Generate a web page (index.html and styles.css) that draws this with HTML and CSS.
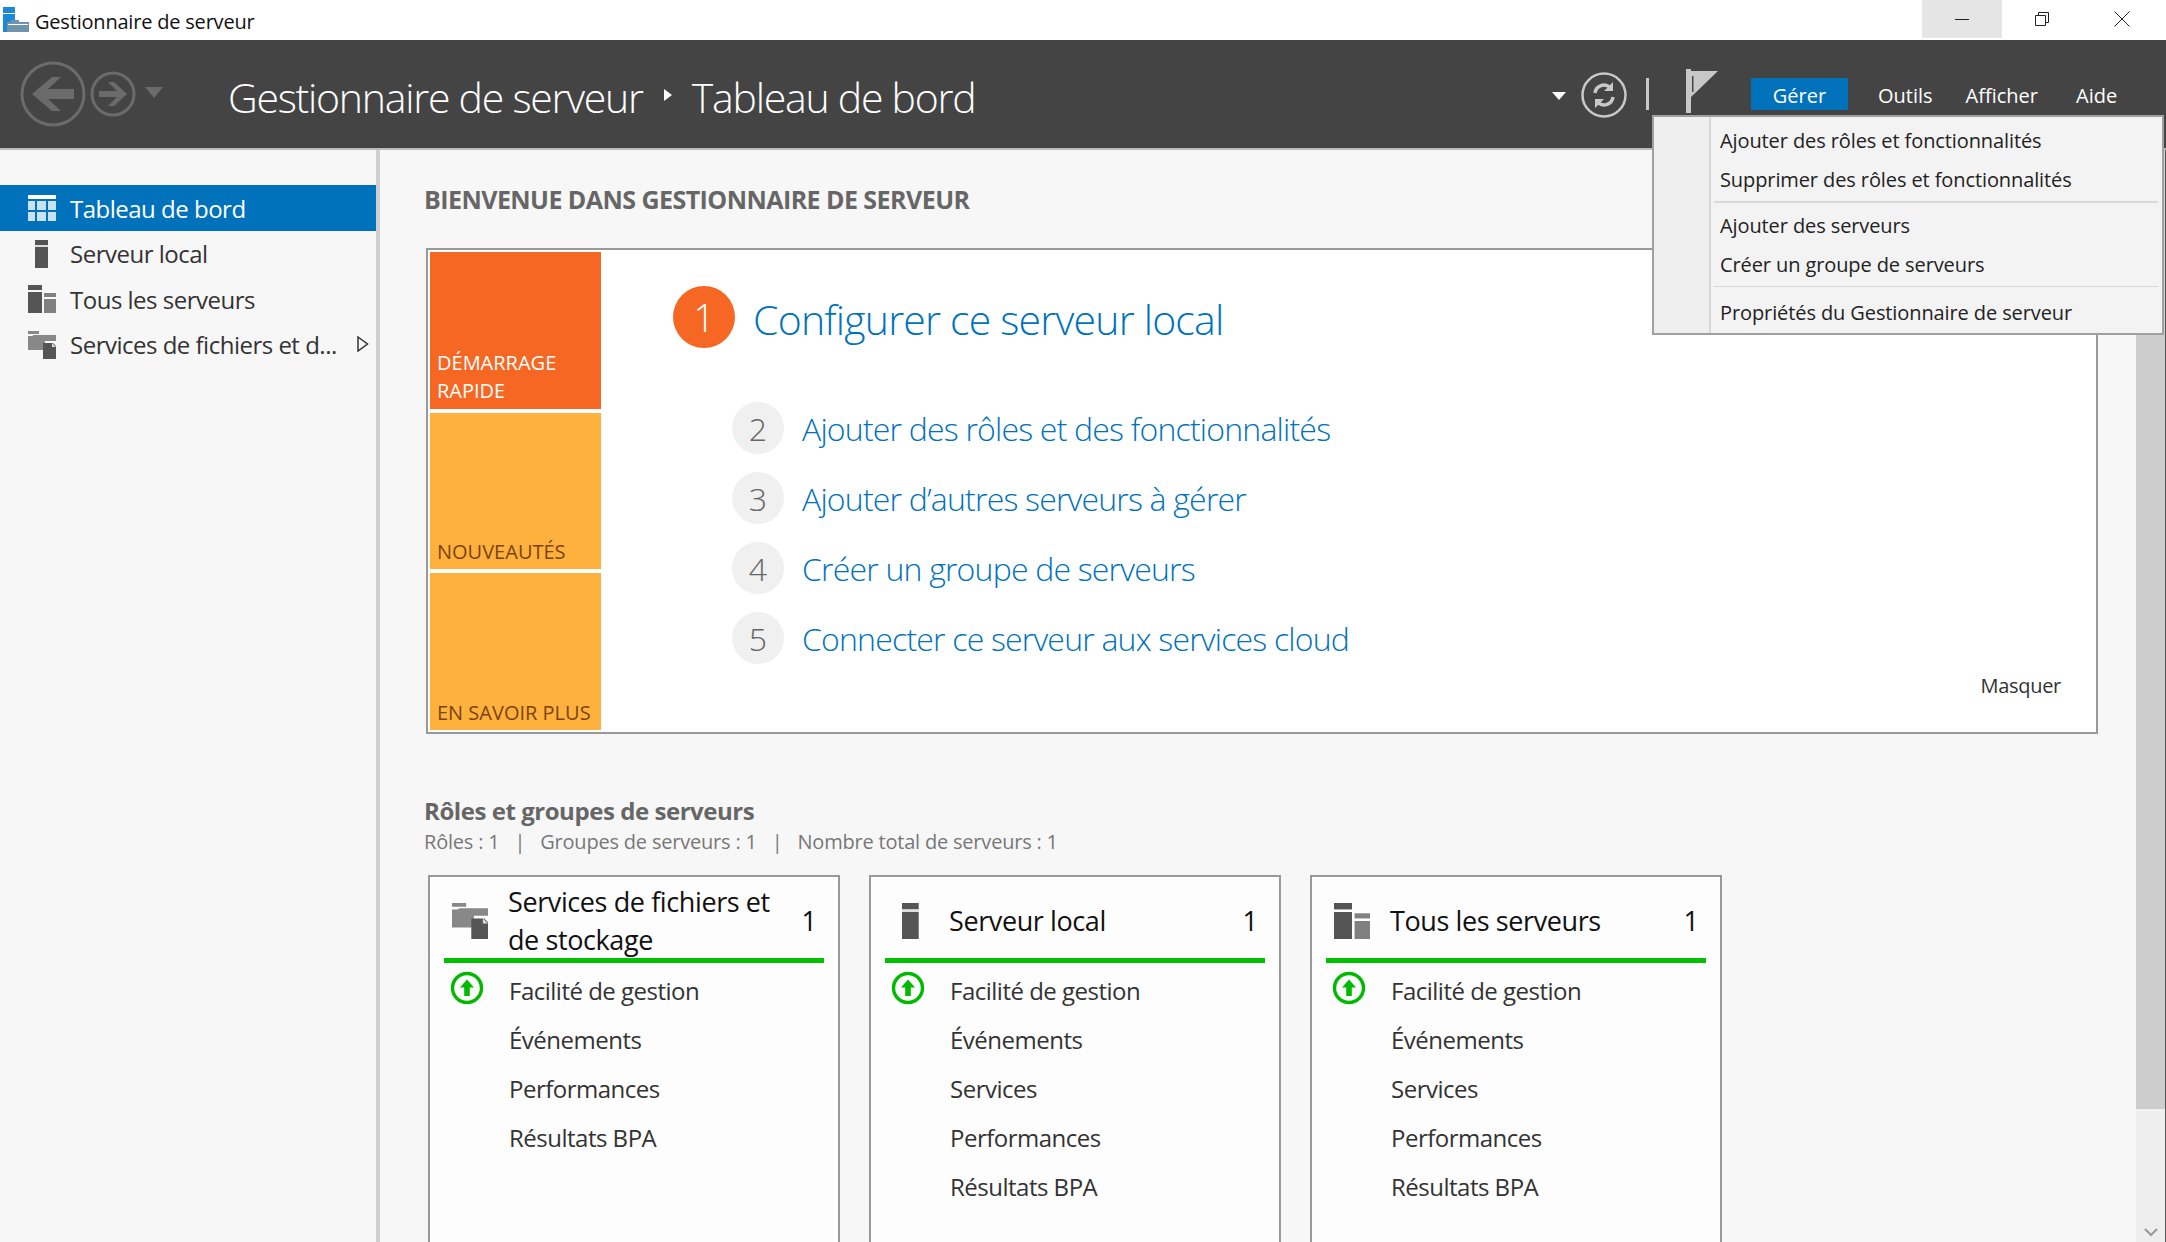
FILE: index.html
```html
<!DOCTYPE html>
<html lang="fr">
<head>
    <meta charset="UTF-8">
    <title>Gestionnaire de serveur</title>
    <link rel="stylesheet" href="styles.css">
</head>
<body>
    <svg class="defs" width="0" height="0">
        <symbol id="ico-local" viewBox="0 0 28 28">
            <rect x="7" y="0" width="13" height="5" fill="#555"/>
            <rect x="7" y="5" width="13" height="2" fill="#ddd"/>
            <rect x="7" y="7" width="13" height="21" fill="#555"/>
        </symbol>
        <symbol id="ico-all" viewBox="0 0 28 28">
            <rect x="0" y="0" width="14" height="5" fill="#555"/>
            <rect x="0" y="7" width="14" height="21" fill="#555"/>
            <rect x="16" y="8" width="12" height="4" fill="#808080"/>
            <rect x="16" y="14" width="12" height="14" fill="#808080"/>
        </symbol>
        <symbol id="ico-files" viewBox="0 0 28 28">
            <path d="M0 0h11v3H0zM0 5h4l2-1h22v6H17v9H0z" fill="#888"/>
            <path d="M15 12h10l3 3v13H15z" fill="#555"/>
            <path d="M24 12l4 4h-4z" fill="#ddd"/>
        </symbol>
        <symbol id="ico-up" viewBox="0 0 34 34">
            <circle cx="17" cy="17" r="14.5" fill="none" stroke="#00b900" stroke-width="3.4"/>
            <path d="M17 8.5l7 8h-4.2v8.5h-5.600v-8.500H10z" fill="#00b900"/>
        </symbol>
    </svg>

    <div class="titlebar">
        <svg class="app-icon" viewBox="0 0 26 25">
            <rect x="0" y="0" width="12" height="6" fill="#1e88d8"/>
            <rect x="0" y="7" width="12" height="18" fill="#1e88d8"/>
            <path d="M4 15h4v-2h8v2h10v10H4z" fill="#6f93ad"/>
            <rect x="5" y="17" width="20" height="1" fill="#fff"/>
        </svg>
        <span class="app-name">Gestionnaire de serveur</span>
        <div class="win-btns">
            <div class="win-btn hover">
                <svg width="14" height="14" viewBox="0 0 14 14"><path d="M0 7.500h14" stroke="#222" fill="none"/></svg>
            </div>
            <div class="win-btn">
                <svg width="16" height="16" viewBox="0 0 16 16"><path d="M1.500 4.500h10v10h-10zM4.500 4.500v-3h10v10h-3" stroke="#222" fill="none"/></svg>
            </div>
            <div class="win-btn">
                <svg width="16" height="16" viewBox="0 0 16 16"><path d="M.5.500l15 15M15.500.500l-15 15" stroke="#222" fill="none"/></svg>
            </div>
        </div>
    </div>

    <header class="topbar">
        <div class="nav-btns">
            <svg width="66" height="66" viewBox="0 0 66 66">
                <circle cx="33" cy="33" r="31" fill="none" stroke="#6b6b6b" stroke-width="3"/>
                <path d="M12 33l20-17h9L28 28h26v10H28l13 12h-9z" fill="#6b6b6b"/>
            </svg>
            <svg width="46" height="46" viewBox="0 0 46 46">
                <circle cx="23" cy="23" r="21" fill="none" stroke="#6b6b6b" stroke-width="3"/>
                <path d="M37 23L24 11h-6l9 9H9v6h18l-9 9h6z" fill="#6b6b6b"/>
            </svg>
            <span class="nav-drop"></span>
        </div>
        <div class="crumbs">
            <span>Gestionnaire de serveur</span>
            <span class="crumb-sep"></span>
            <span>Tableau de bord</span>
        </div>
        <div class="tools">
            <span class="tool-drop"></span>
            <svg class="refresh" width="46" height="46" viewBox="0 0 46 46">
                <circle cx="23" cy="23" r="21.500" fill="none" stroke="#c8c8c8" stroke-width="2.500"/>
                <path d="M14 21a9 9 0 0 1 15-5.500M32 25a9 9 0 0 1-15 5.500" fill="none" stroke="#c8c8c8" stroke-width="3.500"/>
                <path d="M32 10v9h-9zM14 36v-9h9z" fill="#c8c8c8"/>
            </svg>
            <span class="tool-sep"></span>
            <svg class="flag" width="32" height="44" viewBox="0 0 32 44">
                <path d="M0 0h5v44H0z" fill="#c8c8c8"/>
                <path d="M5 2h27L5 28z" fill="#c8c8c8"/>
                <path d="M6 7h1.500v16H6z" fill="#444"/>
            </svg>
            <nav class="menu-bar">
                <a class="menu-item active">Gérer</a>
                <a class="menu-item outils">Outils</a>
                <a class="menu-item afficher">Afficher</a>
                <a class="menu-item aide">Aide</a>
            </nav>
        </div>
    </header>

    <div class="content">
        <aside class="sidebar">
            <div class="side-row selected">
                <svg class="side-ico" viewBox="0 0 28 26">
                    <rect width="28" height="4" fill="#fff"/>
                    <path d="M0 6h7v9H0zM9 6h9v9H9zM20 6h8v9h-8zM0 17h7v9H0zM9 17h9v9H9zM20 17h8v9h-8z" fill="#c9e2f2"/>
                </svg>
                <span>Tableau de bord</span>
            </div>
            <div class="side-row"><svg class="side-ico"><use href="#ico-local"/></svg><span>Serveur local</span></div>
            <div class="side-row"><svg class="side-ico"><use href="#ico-all"/></svg><span>Tous les serveurs</span></div>
            <div class="side-row">
                <svg class="side-ico"><use href="#ico-files"/></svg>
                <span>Services de fichiers et d...</span>
                <svg class="side-arrow" width="12" height="16" viewBox="0 0 12 16"><path d="M1 1l9.500 7L1 15z" fill="none" stroke="#333" stroke-width="1.500"/></svg>
            </div>
        </aside>

        <main class="main">
            <h2 class="welcome">BIENVENUE DANS GESTIONNAIRE DE SERVEUR</h2>

            <section class="quick">
                <div class="tiles">
                    <div class="tile orange">DÉMARRAGE<br>RAPIDE</div>
                    <div class="tile amber">NOUVEAUTÉS</div>
                    <div class="tile amber">EN SAVOIR PLUS</div>
                </div>
                <div class="steps">
                    <div class="step-main">
                        <span class="num-big">1</span>
                        <a class="link-big">Configurer ce serveur local</a>
                    </div>
                    <div class="step"><span class="num">2</span><a class="link">Ajouter des rôles et des fonctionnalités</a></div>
                    <div class="step"><span class="num">3</span><a class="link">Ajouter d’autres serveurs à gérer</a></div>
                    <div class="step"><span class="num">4</span><a class="link">Créer un groupe de serveurs</a></div>
                    <div class="step"><span class="num">5</span><a class="link">Connecter ce serveur aux services cloud</a></div>
                </div>
                <a class="hide-link">Masquer</a>
            </section>

            <h3 class="roles-title">Rôles et groupes de serveurs</h3>
            <p class="roles-sub">Rôles : 1 &nbsp; | &nbsp; Groupes de serveurs : 1 &nbsp; | &nbsp; Nombre total de serveurs : 1</p>

            <div class="cards">
                <div class="card">
                    <div class="card-head">
                        <svg class="card-ico"><use href="#ico-files"/></svg>
                        <span class="card-name">Services de fichiers et de stockage</span>
                        <span class="card-count">1</span>
                    </div>
                    <div class="card-row"><svg class="up-ico"><use href="#ico-up"/></svg>Facilité de gestion</div>
                    <div class="card-row">Événements</div>
                    <div class="card-row">Performances</div>
                    <div class="card-row">Résultats BPA</div>
                </div>
                <div class="card">
                    <div class="card-head">
                        <svg class="card-ico"><use href="#ico-local"/></svg>
                        <span class="card-name">Serveur local</span>
                        <span class="card-count">1</span>
                    </div>
                    <div class="card-row"><svg class="up-ico"><use href="#ico-up"/></svg>Facilité de gestion</div>
                    <div class="card-row">Événements</div>
                    <div class="card-row">Services</div>
                    <div class="card-row">Performances</div>
                    <div class="card-row">Résultats BPA</div>
                </div>
                <div class="card">
                    <div class="card-head">
                        <svg class="card-ico"><use href="#ico-all"/></svg>
                        <span class="card-name">Tous les serveurs</span>
                        <span class="card-count">1</span>
                    </div>
                    <div class="card-row"><svg class="up-ico"><use href="#ico-up"/></svg>Facilité de gestion</div>
                    <div class="card-row">Événements</div>
                    <div class="card-row">Services</div>
                    <div class="card-row">Performances</div>
                    <div class="card-row">Résultats BPA</div>
                </div>
            </div>
        </main>

        <div class="scrollbar">
            <div class="thumb"></div>
            <svg class="scroll-down" width="14" height="9" viewBox="0 0 14 9"><path d="M1 1l6 6 6-6" fill="none" stroke="#999" stroke-width="2"/></svg>
        </div>
    </div>

    <div class="drop-menu">
        <div class="drop-item">Ajouter des rôles et fonctionnalités</div>
        <div class="drop-item">Supprimer des rôles et fonctionnalités</div>
        <div class="drop-sep"></div>
        <div class="drop-item">Ajouter des serveurs</div>
        <div class="drop-item">Créer un groupe de serveurs</div>
        <div class="drop-sep thin"></div>
        <div class="drop-item">Propriétés du Gestionnaire de serveur</div>
    </div>
</body>
</html>
```

FILE: styles.css
```css
* {
    box-sizing: border-box;
}
html, body {
    margin: 0;
    height: 1242px;
    overflow: hidden;
}
body {
    font-family: "Open Sans", "Noto Sans", sans-serif;
    background: #f7f7f7;
    color: #333;
    display: flex;
    flex-direction: column;
    position: relative;
}
.defs {
    position: absolute;
}

/* window title */
.titlebar {
    height: 40px;
    flex: none;
    background: #fff;
    display: flex;
    align-items: flex-start;
    padding-left: 3px;
}
.app-icon {
    width: 26px;
    height: 25px;
    margin-top: 7px;
}
.app-name {
    margin-left: 6px;
    margin-top: 8px;
    font-size: 20px;
    line-height: 27px;
    letter-spacing: -0.2px;
    color: #111;
}
.win-btns {
    margin-left: auto;
    margin-right: 4px;
    display: flex;
}
.win-btn {
    width: 80px;
    height: 38px;
    display: flex;
    align-items: center;
    justify-content: center;
}
.win-btn.hover {
    background: #e5e5e5;
}

/* dark header */
.topbar {
    height: 110px;
    flex: none;
    background: #444;
    border-bottom: 2px solid #bbb;
    display: flex;
    align-items: flex-start;
    padding-left: 20px;
    color: #fff;
}
.nav-btns {
    width: 208px;
    flex: none;
    padding-top: 21px;
    display: flex;
    align-items: center;
    gap: 4px;
    height: 87px;
}
.nav-drop {
    width: 0;
    height: 0;
    margin-left: 5px;
    margin-bottom: 3px;
    border-left: 9px solid transparent;
    border-right: 9px solid transparent;
    border-top: 11px solid #6b6b6b;
}
.crumbs {
    display: flex;
    align-items: center;
    height: 114px;
    font-size: 41px;
    font-weight: 300;
    letter-spacing: -1.25px;
}
.crumb-sep {
    width: 0;
    height: 0;
    margin: 0 20px 5px 21px;
    border-top: 6px solid transparent;
    border-bottom: 6px solid transparent;
    border-left: 8px solid #fff;
}
.tools {
    margin-left: auto;
    display: flex;
    align-items: flex-start;
    position: relative;
    height: 108px;
}
.tool-drop {
    width: 0;
    height: 0;
    margin-top: 52px;
    border-left: 7px solid transparent;
    border-right: 7px solid transparent;
    border-top: 8px solid #fff;
}
.refresh {
    margin-top: 32px;
    margin-left: 15px;
}
.tool-sep {
    width: 3px;
    height: 32px;
    margin-top: 38px;
    margin-left: 19px;
    background: #c8c8c8;
}
.flag {
    margin-top: 29px;
    margin-left: 37px;
}
.menu-bar {
    margin-left: 33px;
    margin-top: 38px;
    display: flex;
    width: 415px;
    font-size: 20px;
}
.menu-item {
    height: 32px;
    line-height: 35px;
    text-align: center;
}
.menu-item.active {
    width: 97px;
    background: #0072bc;
}
.menu-item.outils {
    margin-left: 30px;
}
.menu-item.afficher {
    margin-left: 33px;
}
.menu-item.aide {
    margin-left: 38px;
}

/* page body */
.content {
    flex: 1;
    display: flex;
    min-height: 0;
}
.sidebar {
    width: 380px;
    flex: none;
    border-right: 4px solid #d0d0d0;
    padding-top: 35px;
}
.side-row {
    height: 45.5px;
    display: flex;
    align-items: center;
    padding-left: 28px;
    font-size: 24px;
    letter-spacing: -0.5px;
    color: #333;
}
.side-row.selected {
    background: #0072bc;
    color: #fff;
    height: 46px;
}
.side-ico {
    width: 28px;
    height: 28px;
    margin-right: 14px;
    flex: none;
}
.side-arrow {
    margin-left: 20px;
    margin-bottom: 2px;
}
.main {
    flex: 1;
    min-width: 0;
    padding: 33px 0 0 44px;
    overflow: hidden;
}
.welcome {
    margin: 0 0 33px;
    font-size: 25px;
    line-height: 32px;
    letter-spacing: -0.55px;
    color: #666;
}
.quick {
    width: 1672px;
    height: 486px;
    margin-left: 2px;
    border: 2px solid #999;
    background: #fff;
    display: flex;
    position: relative;
}
.tiles {
    padding: 2px;
    width: 175px;
    flex: none;
    display: flex;
    flex-direction: column;
    gap: 4px;
}
.tile {
    height: 157px;
    display: flex;
    align-items: flex-end;
    padding: 0 0 4px 7px;
    font-size: 20px;
    line-height: 28px;
    letter-spacing: 0;
}
.tile.orange {
    background: #f56723;
    color: #fff;
}
.tile.amber {
    background: #ffb13d;
    color: #7a4410;
    padding-bottom: 3px;
}
.steps {
    padding: 35px 0 0 70px;
}
.step-main {
    display: flex;
    align-items: center;
    height: 64px;
    margin-bottom: 53px;
}
.num-big {
    width: 62px;
    height: 62px;
    border-radius: 50%;
    background: #f56723;
    color: #fff;
    font-size: 38px;
    font-weight: 300;
    line-height: 62px;
    text-align: center;
}
.link-big {
    margin-left: 18px;
    padding-top: 3px;
    font-size: 41px;
    font-weight: 300;
    letter-spacing: -0.8px;
    color: #0072bc;
}
.step {
    height: 70px;
    margin-left: 59px;
    display: flex;
    align-items: flex-start;
}
.num {
    width: 52px;
    height: 52px;
    border-radius: 50%;
    background: #f0f0f0;
    color: #666;
    font-size: 32px;
    font-weight: 300;
    line-height: 54px;
    text-align: center;
}
.link {
    margin-left: 18px;
    padding-top: 1px;
    font-size: 32px;
    line-height: 52px;
    font-weight: 300;
    letter-spacing: -0.8px;
    color: #0072bc;
}
.hide-link {
    position: absolute;
    right: 35px;
    bottom: 32px;
    font-size: 20px;
    line-height: 28px;
    letter-spacing: -0.3px;
    color: #333;
}
.roles-title {
    margin: 62px 0 0;
    font-size: 24px;
    line-height: 30px;
    letter-spacing: -0.45px;
    color: #666;
}
.roles-sub {
    margin: 2px 0 0;
    font-size: 20px;
    line-height: 28px;
    letter-spacing: -0.2px;
    color: #777;
}
.cards {
    display: flex;
    gap: 29px;
    margin: 19px 0 0 4px;
}
.card {
    width: 412px;
    height: 400px;
    flex: none;
    border: 2px solid #999;
    background: #fdfdfd;
    padding: 0 14px;
}
.card-head {
    height: 86px;
    display: flex;
    align-items: center;
    border-bottom: 5px solid #00c000;
    padding: 6px 0 0 8px;
    margin-bottom: 3px;
}
.card-ico {
    width: 36px;
    height: 36px;
    flex: none;
    margin-right: 20px;
}
.card-name {
    flex: 1;
    font-size: 27px;
    line-height: 38px;
    letter-spacing: -0.4px;
    color: #111;
    padding-right: 20px;
}
.card-count {
    font-size: 27px;
    color: #111;
    margin-right: 7px;
}
.card-row {
    height: 49px;
    display: flex;
    align-items: center;
    padding-left: 65px;
    position: relative;
    font-size: 24px;
    letter-spacing: -0.5px;
    color: #333;
}
.up-ico {
    position: absolute;
    left: 6px;
    top: 5px;
    width: 34px;
    height: 34px;
}

/* scrollbar */
.scrollbar {
    width: 30px;
    flex: none;
    background: #eee;
    border-right: 1px solid #555;
    position: relative;
}
.thumb {
    height: 959px;
    background: #cdcdcd;
}
.scroll-down {
    position: absolute;
    left: 8px;
    bottom: 5px;
}

/* Gerer menu */
.drop-menu {
    position: absolute;
    left: 1652px;
    top: 115px;
    width: 512px;
    height: 220px;
    border: 2px solid #a0a0a0;
    background: linear-gradient(to right, #efefef 55px, #d8d8d8 55px, #d8d8d8 57px, #f3f3f3 57px);
    padding: 4px 4px 0 66px;
    font-size: 20px;
    letter-spacing: -0.1px;
    color: #222;
}
.drop-item {
    height: 39px;
    line-height: 39px;
}
.drop-sep {
    height: 2px;
    background: #d8d8d8;
    margin: 2px 0 3px -6px;
}
.drop-sep.thin {
    height: 1px;
    margin-top: 2px;
    margin-bottom: 6px;
}
```
